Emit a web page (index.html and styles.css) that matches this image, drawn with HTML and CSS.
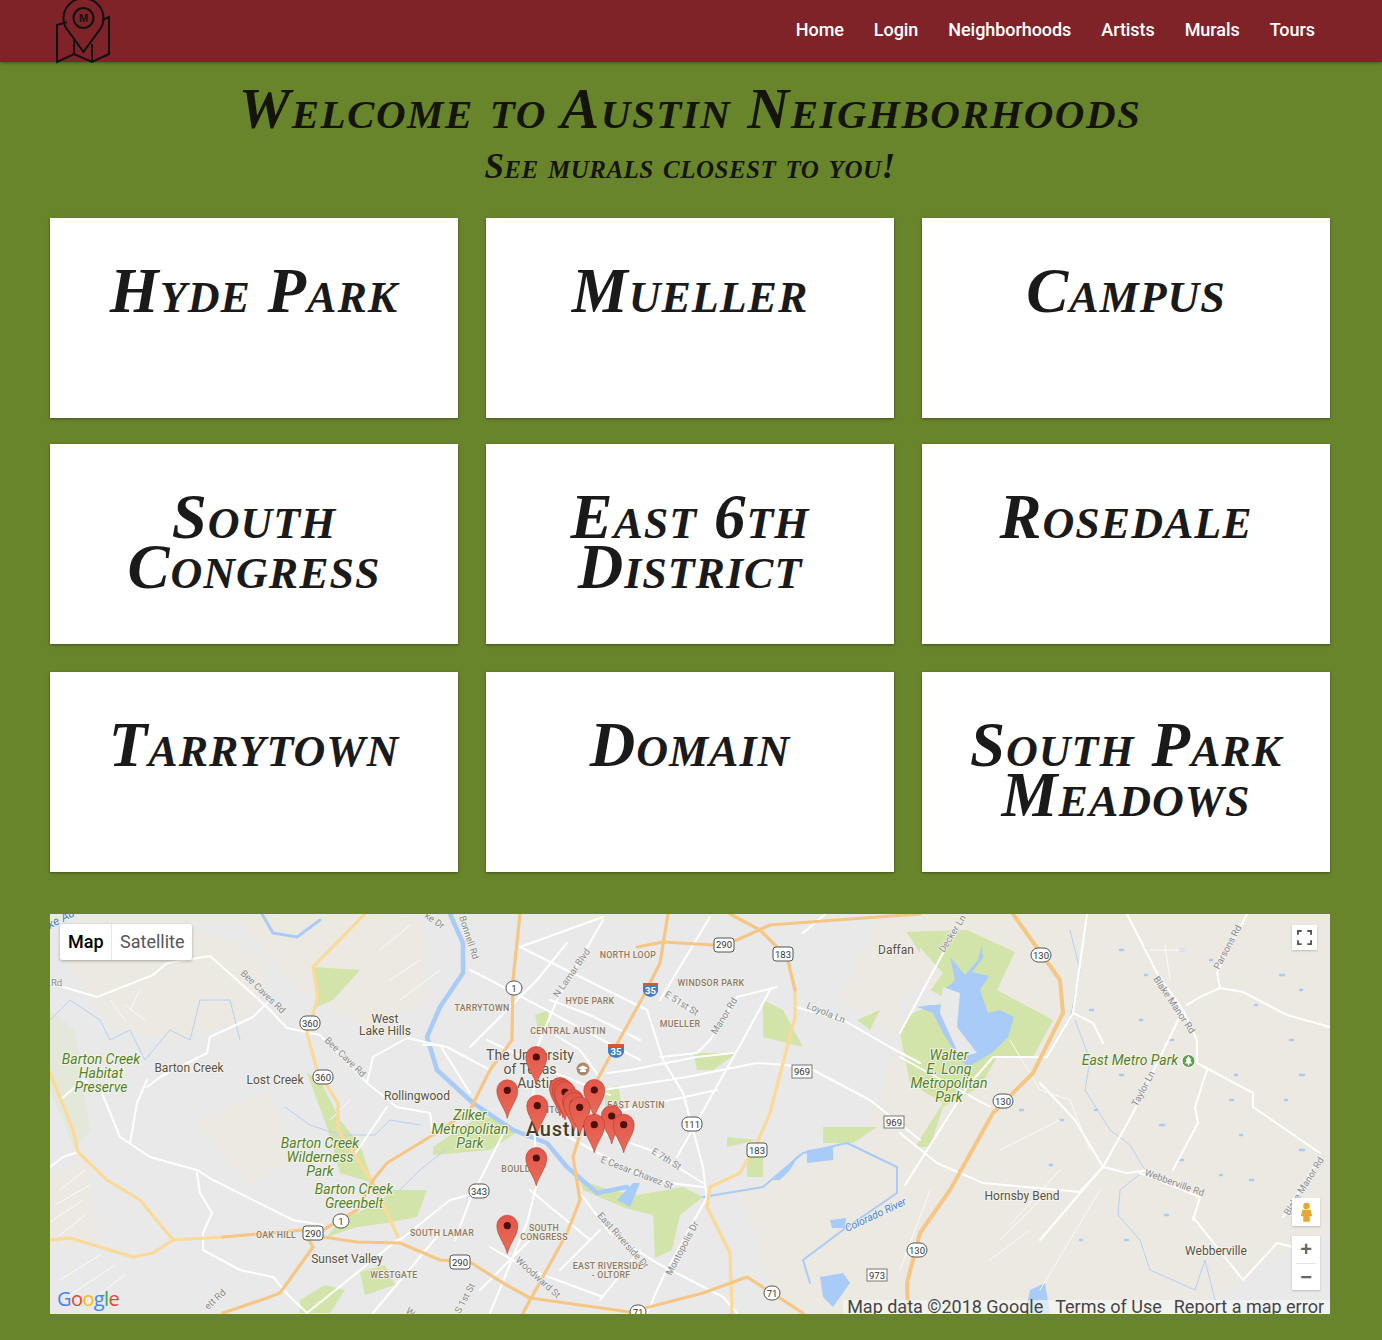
FILE: index.html
```html
<!DOCTYPE html>
<html lang="en">
<head>
    <meta charset="UTF-8">
    <meta name="viewport" content="width=device-width, initial-scale=1.0">
    <title>Austin Neighborhoods</title>
    <link rel="stylesheet" href="styles.css">
</head>
<body>
    <header class="navbar">
        <svg class="logo" viewBox="55 0 56 64">
            <path d="M67 22 L57 25 V62 L74 54 L92 62 L109 54 V17 L102 20"/>
            <path d="M74 40 V54 M92 44 V62"/>
            <path d="M83.5 52 L69 32 A20 20 0 1 1 98 32 Z"/>
            <circle cx="83.5" cy="18" r="10"/>
            <text class="logo-m" x="83.5" y="22" text-anchor="middle">M</text>
        </svg>
        <nav class="nav-links">
            <a href="#">Home</a>
            <a href="#">Login</a>
            <a href="#">Neighborhoods</a>
            <a href="#">Artists</a>
            <a href="#">Murals</a>
            <a href="#">Tours</a>
        </nav>
    </header>

    <main class="content">
        <h1 class="title">Welcome to Austin Neighborhoods</h1>
        <h2 class="subtitle">See murals closest to you!</h2>

        <div class="cards">
            <a class="card" href="#">Hyde Park</a>
            <a class="card" href="#">Mueller</a>
            <a class="card" href="#">Campus</a>
            <a class="card" href="#">South<br>Congress</a>
            <a class="card" href="#">East 6th<br>District</a>
            <a class="card" href="#">Rosedale</a>
            <a class="card card-low" href="#">Tarrytown</a>
            <a class="card card-low" href="#">Domain</a>
            <a class="card card-low" href="#">South Park<br>Meadows</a>
        </div>

        <div class="map">
            <svg class="map-canvas" viewBox="50 914 1280 400">
                <defs>
                    <linearGradient id="pinFill" x1="0" y1="0" x2="0" y2="1">
                        <stop offset="0" stop-color="#e2574a"/>
                        <stop offset="1" stop-color="#ea6b58"/>
                    </linearGradient>
                    <g id="pin">
                        <path class="pin-body" d="M0 28 C-2 18 -10.5 10 -10.5 0 A10.5 10.5 0 1 1 10.5 0 C10.5 10 2 18 0 28 Z"/>
                        <circle class="pin-dot" r="3.6"/>
                    </g>
                </defs>

                <!-- ground -->
                <rect class="land" x="50" y="914" width="1280" height="400"/>
                <path class="beige" d="M880 914 H1330 V1230 L1260 1262 L1200 1314 H780 L740 1190 L860 1150 L900 1040 L840 1000 Z"/>
                <path class="beige" d="M60 950 L200 930 L270 960 L250 1020 L180 1040 L110 1030 Z"/>
                <path class="beige" d="M240 920 L360 914 L420 920 L430 1000 L370 1030 L300 990 Z"/>
                <path class="beige" d="M195 1120 L270 1090 L290 1160 L250 1185 Z"/>
                <path class="beige" d="M50 1175 L90 1160 L95 1240 L50 1250 Z"/>
                <path class="beige-soft" d="M50 1010 L75 1030 L90 1130 L75 1150 L50 1090 Z"/>

                <!-- parks -->
                <path class="park" d="M313 967 L360 970 L333 1000 L317 1007 Z"/>
                <path class="park" d="M307 1073 L327 1127 L340 1173 L373 1183 L360 1145 L340 1120 L320 1080 Z"/>
                <path class="park" d="M393 1190 L427 1190 L417 1217 L387 1223 L357 1227 L327 1237 L340 1220 L375 1205 Z"/>
                <path class="park" d="M433 1147 L473 1120 L490 1117 L520 1130 L490 1150 L433 1155 Z"/>
                <path class="park" d="M580 1180 L610 1190 L637 1195 L683 1187 L703 1197 L680 1215 L672 1250 L655 1258 L653 1215 L625 1208 L583 1190 Z"/>
                <path class="park" d="M763 1000 L783 1010 L803 1047 L763 1037 Z"/>
                <path class="park" d="M693 1053 L737 1053 L713 1070 L697 1070 Z"/>
                <path class="park" d="M823 1127 L877 1127 L853 1143 L823 1143 Z"/>
                <path class="park" d="M903 1027 L920 997 L930 1047 Z"/>
                <path class="park" d="M857 1020 L880 1010 L870 1030 Z"/>
                <path class="park" d="M727 1137 L757 1140 L727 1147 Z"/>
                <path class="park" d="M747 1157 H763 V1177 H747 Z"/>
                <path class="park" d="M907 933 L920 940 L920 953 Z"/>
                <path class="park" d="M535 1015 L548 1010 L550 1028 L538 1030 Z"/>
                <path class="park" d="M605 1090 L618 1085 L622 1105 L605 1110 Z"/>
                <path class="park" d="M300 1300 L325 1285 L345 1290 L330 1313 L300 1313 Z"/>
                <path class="park" d="M360 1272 L385 1265 L395 1285 L365 1295 Z"/>
                <path class="park" d="M906 932 L967 930 L1015 952 L997 990 L1053 1020 L1033 1057 L997 1057 L980 1087 L943 1107 L930 1147 L915 1147 L943 1103 L910 1083 L900 1033 L943 973 Z"/>
                <path class="land" d="M900 1000 L920 985 L950 1000 L920 1010 L900 1020 Z"/>

                <!-- water -->
                <path class="water" d="M982 945 L983 958 L972 972 L989 976 L980 990 L988 1013 L1000 1010 L1014 1017 L1008 1037 L993 1052 L980 1060 L968 1067 L958 1057 L943 1033 L933 1013 L917 1007 L930 1005 L945 1005 L943 990 L950 985 L955 980 L950 957 L965 975 L978 960 Z"/>
                <path class="land" d="M943 987 L960 993 L957 1027 L977 1053 L960 1057 L940 1013 Z"/>
                <path class="water" d="M773 1180 L800 1153 L790 1170 L780 1180 Z"/>
                <path class="water" d="M807 1150 L833 1147 L833 1160 L807 1163 Z"/>
                <path class="water" d="M820 1277 L843 1273 L850 1283 L833 1307 L823 1297 Z"/>
                <path class="water" d="M617 1200 L633 1183 L640 1183 L630 1207 Z"/>
                <path class="water" d="M1030 1290 L1045 1283 L1050 1314 H1025 Z"/>
                <path class="water" d="M830 1220 L846 1218 L845 1228 L832 1228 Z"/>
                <path class="river" d="M450 914 L463 943 L463 973 L440 1007 L427 1037 L437 1070 L473 1103 L513 1130 L547 1143 L567 1167 L597 1193 L627 1187"/>
                <path class="river river-arm" d="M262 914 L273 933 L297 937 L320 920"/>
                <path class="river-thin" d="M703 1197 L763 1187 L803 1153 L847 1143 L897 1167 L897 1193 L843 1230 L803 1260 L810 1283"/>
                <path class="stream" d="M50 1020 L70 1000 L100 1020 L110 1040 L130 1030 L145 1060 L170 1030 L190 1040 L200 1000 L230 1000 L240 1040"/>
                <path class="stream" d="M1075 1020 L1090 1060 L1085 1090 L1110 1130 L1130 1145 L1145 1170 L1120 1190 L1118 1215 L1140 1240 L1150 1270 L1195 1290 L1205 1260 L1215 1300"/>
                <path class="stream" d="M285 1107 L310 1125 L340 1135 L375 1135 L390 1120 L420 1125"/>
                <path class="stream" d="M1070 1020 L1080 970 L1070 930"/>
                <path class="stream" d="M400 1190 L420 1170 L445 1150"/>
                <path class="specks" d="M1120 950h3M1145 975h2M1180 950h4M1210 960h2M1280 975h4M1300 990h2M1090 1010h3M1140 1020h2M1170 1040h3M1255 1005h2M1290 1040h3M1235 1075h2M1300 1075h4M1120 1075h3M1095 1110h2M1160 1125h4M1230 1100h3M1285 1100h2M1300 1150h4M1240 1135h2M1180 1160h3M1060 1120h3M1050 1165h2M1020 1110h3M960 1170h2M1250 1180h3M1125 1240h3M1080 1240h2M1165 1215h3M1220 1175h2"/>

                <!-- roads -->
                <g class="roads">
                    <path d="M50 983 L97 997 L153 975 L167 963 L210 956 L267 1007 L287 1028 L320 1035 L367 1083 L397 1107 L430 1113 L433 1133"/>
                    <path d="M60 1100 L83 1080 L102 1093 L120 1137 L150 1157 L197 1170 L213 1180 L293 1220 L323 1225"/>
                    <path d="M147 1087 L160 1077 L207 1053 L210 1037 L253 1017 L267 1003"/>
                    <path d="M130 1143 L137 1103 L147 1080"/>
                    <path d="M197 1173 L200 1193 L212 1213 L203 1233 L203 1250 L240 1270 L273 1277 L290 1297 L307 1313"/>
                    <path d="M50 1167 L63 1157 L78 1152"/>
                    <path d="M387 1107 L353 1157"/>
                    <path d="M367 1083 L373 1057 L407 1038 L447 1047 L490 1070"/>
                    <path d="M423 1045 H440 L470 1093"/>
                    <path d="M307 1313 L400 1238"/>
                    <path d="M400 1240 L450 1200 L487 1190"/>
                    <path d="M373 1313 L440 1233"/>
                    <path d="M603 920 L557 1000 L537 1047 L533 1100 L537 1183 L527 1223 L490 1313"/>
                    <path d="M520 947 L647 1010 L663 1060 L683 1093 L703 1167 L707 1200"/>
                    <path d="M603 1090 L687 1077 L757 1063 L787 1065 L813 1070 L870 1100 L920 1140"/>
                    <path d="M607 1073 L630 1070 L697 1057 L733 1053"/>
                    <path d="M610 1113 L717 1090"/>
                    <path d="M603 1133 L650 1150 L703 1183"/>
                    <path d="M550 1127 L630 1170 L670 1183 L703 1187"/>
                    <path d="M580 1193 L610 1233 L657 1263 L723 1297 L737 1313"/>
                    <path d="M707 1197 L663 1277 L647 1313"/>
                    <path d="M660 1057 L697 1053 L710 1040 L737 997 L777 987"/>
                    <path d="M667 997 L697 1013"/>
                    <path d="M795 1007 L843 1020 L890 1047 L920 1063"/>
                    <path d="M677 1157 L743 1040 L770 990"/>
                    <path d="M710 917 L660 1000"/>
                    <path d="M520 947 L603 917"/>
                    <path d="M470 1047 L537 980 L567 943"/>
                    <path d="M470 970 L490 980 L640 1060"/>
                    <path d="M803 933 L830 910"/>
                    <path d="M490 1247 L530 1270 L603 1297"/>
                    <path d="M1087 914 L1073 1013 L1047 1057 L993 1057 L967 1087 L905 1185"/>
                    <path d="M943 953 L900 1033"/>
                    <path d="M900 1133 L937 1163 L983 1183 L1080 1192 L1103 1167 L1127 1173 L1150 1170"/>
                    <path d="M1103 1167 L1133 1113 L1183 1010 L1157 973 L1127 914"/>
                    <path d="M1183 1010 L1197 1040 L1197 1063 L1253 1093 L1253 1107 L1320 1153"/>
                    <path d="M1220 988 L1243 992 L1287 1015 L1330 1027"/>
                    <path d="M1247 914 L1217 973 L1220 988 L1200 997 L1187 1005"/>
                    <path d="M1207 1070 L1195 1107 L1198 1123 L1173 1170"/>
                    <path d="M1193 1217 L1243 1280 L1277 1243 L1293 1247"/>
                    <path d="M1140 1173 L1200 1197 L1193 1220"/>
                    <path d="M1320 1157 L1283 1217"/>
                    <path d="M900 1057 L990 1107"/>
                    <path d="M1073 1013 L1093 1023 L1103 1043"/>
                    <path d="M1040 1083 L1075 1120 L1103 1167"/>
                    <path d="M1040 1240 L1100 1170"/>
                    <path d="M550 1000 L590 1015 L640 1040"/>
                    <path d="M487 1040 L560 1075 L610 1095"/>
                    <path d="M555 1035 L580 1050 L598 1075"/>
                    <path d="M505 1130 L470 1200 L455 1240"/>
                    <path d="M530 1190 L590 1240"/>
                    <path d="M480 1290 L530 1240"/>
                    <path d="M560 1270 L600 1230"/>
                    <path d="M600 1300 L640 1250"/>
                </g>
                <g class="roads-thin">
                    <path d="M60 1190 L85 1170 M55 1205 L90 1185 M50 1222 L83 1200 M60 1235 L85 1215"/>
                    <path d="M60 1280 L100 1255 M70 1295 L115 1265 M85 1305 L125 1275"/>
                    <path d="M110 1000 L125 1020 M125 1005 L145 1020 M140 990 L130 1010"/>
                    <path d="M1000 1150 L1060 1120 M1010 1225 L1060 1170 M1000 1240 L1040 1200 M990 1260 L1030 1230"/>
                    <path d="M1150 950 L1185 950 M1165 945 L1170 980"/>
                    <path d="M1040 1290 L1070 1240 L1100 1190"/>
                    <path d="M1010 1040 L1040 1090 L1070 1100 L1090 1150"/>
                    <path d="M390 980 L420 960 M400 1000 L440 970 M380 950 L410 925"/>
                    <path d="M330 1120 L350 1100 M900 1270 L930 1190"/>
                </g>

                <!-- highways -->
                <g class="highways">
                    <path class="hw-light" d="M50 1240 L70 1238 L133 1257 L153 1253 L173 1240 L223 1237"/>
                    <path class="hw-light" d="M50 1073 L73 1130 L78 1152 L107 1180 L140 1200 L173 1240"/>
                    <path class="hw-light" d="M365 914 L313 967 L318 997 L307 1033 L317 1070 L338 1103 L338 1130 L373 1183 L398 1237"/>
                    <path class="hw-light" d="M795 990 L795 1017 L770 1113 L757 1143 L740 1173 L710 1187 L707 1207 L730 1253 L732 1313"/>
                    <path d="M520 914 L513 980 L512 1040 L490 1070 L470 1110 L433 1135 L387 1163 L373 1180 L357 1210 L323 1230 L303 1230 L223 1237"/>
                    <path d="M323 1237 L357 1242 L400 1243 L440 1260 L470 1262 L503 1283 L530 1298 L630 1312 L703 1293 L747 1277 L803 1313"/>
                    <path d="M307 1237 L313 1247 L280 1293 L267 1298 L223 1313"/>
                    <path d="M668 914 L660 963 L643 997 L597 1080 L573 1157 L580 1200 L567 1233 L523 1313"/>
                    <path d="M637 947 L663 942 L713 945 L737 940 L770 925 L837 920 L920 914"/>
                    <path d="M730 914 L760 930 L787 957 L795 990"/>
                    <path class="hw-wide" d="M1013 914 L1060 980 L1063 1013 L1033 1073 L993 1113 L950 1190 L920 1233 L907 1283 L908 1314"/>
                </g>

                <!-- route shields -->
                <g class="shield"><rect x="300" y="1016" width="20" height="14" rx="6"/><text x="310" y="1027">360</text></g>
                <g class="shield"><rect x="313" y="1070" width="20" height="14" rx="6"/><text x="323" y="1081">360</text></g>
                <g class="shield"><rect x="506" y="981" width="16" height="14" rx="7"/><text x="514" y="992">1</text></g>
                <g class="shield"><rect x="333" y="1214" width="16" height="14" rx="7"/><text x="341" y="1225">1</text></g>
                <g class="shield"><rect x="303" y="1226" width="20" height="14" rx="3"/><text x="313" y="1237">290</text></g>
                <g class="shield"><rect x="450" y="1255" width="20" height="14" rx="3"/><text x="460" y="1266">290</text></g>
                <g class="shield"><rect x="469" y="1184" width="20" height="14" rx="6"/><text x="479" y="1195">343</text></g>
                <g class="shield"><rect x="714" y="938" width="20" height="14" rx="3"/><text x="724" y="948">290</text></g>
                <g class="shield"><rect x="773" y="947" width="20" height="14" rx="3"/><text x="783" y="958">183</text></g>
                <g class="shield"><rect x="682" y="1117" width="20" height="14" rx="6"/><text x="692" y="1128">111</text></g>
                <g class="shield"><rect x="747" y="1143" width="20" height="14" rx="3"/><text x="757" y="1154">183</text></g>
                <g class="shield"><rect x="764" y="1286" width="16" height="14" rx="7"/><text x="772" y="1297">71</text></g>
                <g class="shield"><rect x="630" y="1305" width="16" height="14" rx="7"/><text x="638" y="1316">71</text></g>
                <g class="shield"><rect x="1031" y="948" width="20" height="14" rx="7"/><text x="1041" y="959">130</text></g>
                <g class="shield"><rect x="993" y="1094" width="20" height="14" rx="7"/><text x="1003" y="1105">130</text></g>
                <g class="shield"><rect x="907" y="1243" width="20" height="14" rx="7"/><text x="917" y="1254">130</text></g>
                <g class="shield shield-box"><rect x="792" y="1065" width="20" height="13"/><text x="802" y="1075">969</text></g>
                <g class="shield shield-box"><rect x="884" y="1116" width="20" height="12"/><text x="894" y="1126">969</text></g>
                <g class="shield shield-box"><rect x="867" y="1269" width="20" height="12"/><text x="877" y="1279">973</text></g>
                <g class="interstate"><path class="is-blue" d="M643 983 H658 V991 Q657 996 650.500 997 Q644 996 643 991 Z"/><path class="is-red" d="M643 983 H658 V986 H643 Z"/><text x="650.500" y="994">35</text></g>
                <g class="interstate"><path class="is-blue" d="M608 1044 H624 V1052 Q623 1057 616 1058 Q609 1057 608 1052 Z"/><path class="is-red" d="M608 1044 H624 V1047 H608 Z"/><text x="616" y="1055">35</text></g>

                <!-- place names -->
                <g class="place">
                    <text x="385" y="1023">West</text>
                    <text x="385" y="1035">Lake Hills</text>
                    <text x="189" y="1072">Barton Creek</text>
                    <text x="275" y="1084">Lost Creek</text>
                    <text x="417" y="1100">Rollingwood</text>
                    <text x="347" y="1263">Sunset Valley</text>
                    <text x="896" y="954">Daffan</text>
                    <text x="1022" y="1200">Hornsby Bend</text>
                    <text x="1216" y="1255">Webberville</text>
                </g>
                <g class="place place-big">
                    <text x="530" y="1060">The University</text>
                    <text x="530" y="1074">of Texas</text>
                    <text x="537" y="1088">Austin</text>
                </g>
                <text class="city" x="557" y="1136">Austin</text>
                <circle class="poi" cx="583" cy="1069" r="6.500"/>
                <path class="poi-cap" d="M578 1068 L583 1065.500 L588 1068 L583 1070.500 Z M580 1070 H586 V1072 H580 Z"/>

                <g class="area">
                    <text x="482" y="1011">TARRYTOWN</text>
                    <text x="628" y="958">NORTH LOOP</text>
                    <text x="711" y="986">WINDSOR PARK</text>
                    <text x="590" y="1004">HYDE PARK</text>
                    <text x="568" y="1034">CENTRAL AUSTIN</text>
                    <text x="680" y="1027">MUELLER</text>
                    <text x="636" y="1108">EAST AUSTIN</text>
                    <text x="442" y="1236">SOUTH LAMAR</text>
                    <text x="394" y="1278">WESTGATE</text>
                    <text x="276" y="1238">OAK HILL</text>
                    <text x="544" y="1231">SOUTH</text>
                    <text x="544" y="1240">CONGRESS</text>
                    <text x="608" y="1269">EAST RIVERSIDE</text>
                    <text x="611" y="1278">- OLTORF</text>
                    <text x="516" y="1172">BOULD</text>
                    <text x="552" y="1113">NTO</text>
                </g>

                <g class="parkname">
                    <text x="101" y="1064">Barton Creek</text>
                    <text x="101" y="1078">Habitat</text>
                    <text x="101" y="1092">Preserve</text>
                    <text x="470" y="1120">Zilker</text>
                    <text x="470" y="1134">Metropolitan</text>
                    <text x="470" y="1148">Park</text>
                    <text x="320" y="1148">Barton Creek</text>
                    <text x="320" y="1162">Wilderness</text>
                    <text x="320" y="1176">Park</text>
                    <text x="354" y="1194">Barton Creek</text>
                    <text x="354" y="1208">Greenbelt</text>
                    <text x="949" y="1060">Walter</text>
                    <text x="949" y="1074">E. Long</text>
                    <text x="949" y="1088">Metropolitan</text>
                    <text x="949" y="1102">Park</text>
                    <text x="1130" y="1065">East Metro Park</text>
                </g>
                <circle class="park-icon" cx="1188.500" cy="1061" r="6.500"/>
                <path class="park-tree" d="M1188.500 1056 L1191.500 1060 L1190.300 1060 L1192 1063.500 L1189.300 1063.500 V1065.500 H1187.700 V1063.500 L1185 1063.500 L1186.700 1060 L1185.500 1060 Z"/>

                <!-- road names -->
                <g class="roadname">
                    <text transform="translate(240 974) rotate(44)">Bee Caves Rd</text>
                    <text transform="translate(324 1041) rotate(44)">Bee Cave Rd</text>
                    <text transform="translate(459 917) rotate(72)">Bonnell Rd</text>
                    <text transform="translate(424 917) rotate(35)">ke Dr</text>
                    <text x="51" y="986">Rd</text>
                    <text transform="translate(558 998) rotate(-55)">N Lamar Blvd</text>
                    <text transform="translate(664 996) rotate(32)">E 51st St</text>
                    <text transform="translate(716 1035) rotate(-58)">Manor Rd</text>
                    <text transform="translate(806 1008) rotate(22)">Loyola Ln</text>
                    <text transform="translate(651 1153) rotate(32)">E 7th St</text>
                    <text transform="translate(600 1162) rotate(21)">E Cesar Chavez St</text>
                    <text transform="translate(597 1216) rotate(48)">East Riverside Dr</text>
                    <text transform="translate(515 1261) rotate(42)">Woodward St</text>
                    <text transform="translate(671 1276) rotate(-62)">Montopolis Dr</text>
                    <text transform="translate(944 953) rotate(-58)">Decker Ln</text>
                    <text transform="translate(1219 970) rotate(-62)">Parsons Rd</text>
                    <text transform="translate(1153 979) rotate(56)">Blake Manor Rd</text>
                    <text transform="translate(1137 1107) rotate(-62)">Taylor Ln</text>
                    <text transform="translate(1144 1175) rotate(20)">Webberville Rd</text>
                    <text transform="translate(1289 1216) rotate(-58)">Blake Manor Rd</text>
                    <text transform="translate(208 1310) rotate(-42)">ett Rd</text>
                    <text transform="translate(405 1312) rotate(38)">W S</text>
                    <text transform="translate(460 1314) rotate(-62)">S 1st St</text>
                </g>
                <text class="rivername" transform="translate(847 1232) rotate(-25)">Colorado River</text>
                <text class="rivername rivername-top" transform="translate(50 929) rotate(-28)">ke Au</text>

                <!-- markers -->
                <use href="#pin" x="536.300" y="1057"/>
                <use href="#pin" x="507.300" y="1090.300"/>
                <use href="#pin" x="537.300" y="1105.700"/>
                <use href="#pin" x="560" y="1088"/>
                <use href="#pin" x="563" y="1090"/>
                <use href="#pin" x="565" y="1092"/>
                <use href="#pin" x="594.300" y="1090"/>
                <use href="#pin" x="573" y="1100"/>
                <use href="#pin" x="574" y="1103"/>
                <use href="#pin" x="579.700" y="1107.300"/>
                <use href="#pin" x="611.700" y="1116"/>
                <use href="#pin" x="594.300" y="1124.700"/>
                <use href="#pin" x="623.700" y="1124.700"/>
                <use href="#pin" x="536.300" y="1158"/>
                <use href="#pin" x="507.300" y="1225.700"/>

                <!-- google logo -->
                <text class="google" x="57" y="1306"><tspan fill="#4285f4">G</tspan><tspan fill="#ea4335">o</tspan><tspan fill="#fbbc05">o</tspan><tspan fill="#4285f4">g</tspan><tspan fill="#34a853">l</tspan><tspan fill="#ea4335">e</tspan></text>
            </svg>

            <div class="map-type">
                <span class="map-type-btn map-type-active">Map</span>
                <span class="map-type-btn">Satellite</span>
            </div>

            <button class="map-btn fullscreen" aria-label="Fullscreen">
                <svg viewBox="0 0 16 16"><path d="M1 5 V1 H5 M11 1 H15 V5 M15 11 V15 H11 M5 15 H1 V11"/></svg>
            </button>

            <button class="map-btn pegman" aria-label="Street View">
                <svg viewBox="0 0 14 22">
                    <circle cx="7" cy="4" r="3.500"/>
                    <path d="M2.500 8 H11.500 L13 15 L10.500 15 L10.500 21 H3.500 L3.500 15 L1 15 Z"/>
                </svg>
            </button>

            <div class="zoom-box">
                <button class="zoom-btn">+</button>
                <span class="zoom-line"></span>
                <button class="zoom-btn">−</button>
            </div>

            <div class="attribution">
                <span>Map data ©2018 Google</span>
                <span>Terms of Use</span>
                <span>Report a map error</span>
            </div>
        </div>
    </main>
</body>
</html>
```

FILE: styles.css
```css
body {
    font-family: Roboto, Arial, sans-serif;
    margin: 0;
    padding: 0;
    background-color: #69852c;
}

.navbar {
    height: 62px;
    background-color: #7f2329;
    box-shadow: 0 1px 3px rgba(0, 0, 0, 0.35);
    display: flex;
    justify-content: space-between;
    align-items: center;
    padding: 0 67px 0 55px;
    position: relative;
}
.logo {
    width: 56px;
    height: 64px;
    align-self: flex-start;
    fill: none;
    stroke: #111;
    stroke-width: 2;
}
.logo-m {
    font-family: "Liberation Sans", sans-serif;
    font-size: 11px;
    font-weight: 700;
    fill: #111;
    stroke: none;
}
.nav-links {
    display: flex;
    gap: 30px;
}
.nav-links a {
    color: #fff;
    text-decoration: none;
    font-size: 18px;
    font-weight: 500;
    letter-spacing: -0.06px;
    padding: 0 0 3px 0;
}

.content {
    padding: 0 52px 26px 50px;
}
.title, .subtitle, .card {
    font-family: "Liberation Serif", serif;
    font-style: italic;
    font-weight: 700;
    font-variant: small-caps;
    color: #141408;
}
.title {
    font-size: 58px;
    line-height: 66px;
    letter-spacing: 1.5px;
    text-align: center;
    margin: 14px 0 0 0;
}
.subtitle {
    font-size: 35px;
    line-height: 44px;
    letter-spacing: 0.5px;
    text-align: center;
    margin: 3px 0 29px 0;
}

.cards {
    display: grid;
    grid-template-columns: repeat(3, 408px);
    column-gap: 28px;
    row-gap: 26px;
}
.card {
    height: 200px;
    box-sizing: border-box;
    padding-top: 48px;
    background-color: #fff;
    box-shadow: 0 1px 3px rgba(0, 0, 0, 0.4);
    font-size: 63px;
    line-height: 50px;
    letter-spacing: 1px;
    text-align: center;
    text-decoration: none;
    color: #1a1a1a;
}
.card-low {
    margin-top: 2px;
}

.map {
    position: relative;
    width: 1280px;
    height: 400px;
    margin-top: 42px;
    overflow: hidden;
}
.map-canvas {
    display: block;
    width: 1280px;
    height: 400px;
    font-family: Roboto, Arial, sans-serif;
}
.land { fill: #e9e9e9; }
.beige { fill: #ebe9e1; }
.beige-soft { fill: #e3e8da; }
.park { fill: #d2e4a9; }
.water { fill: #a9cbf8; }
.river, .river-thin, .stream, .specks, .roads path, .roads-thin path, .highways path {
    fill: none;
    stroke-linejoin: round;
    stroke-linecap: round;
}
.river { stroke: #a9cbf8; stroke-width: 4.5; }
.river-arm { stroke-width: 3; }
.river-thin { stroke: #a9cbf8; stroke-width: 2; }
.stream { stroke: #b4d0f6; stroke-width: 1; }
.specks { stroke: #a9cbf8; stroke-width: 2.5; }
.roads path { stroke: #fff; stroke-width: 2; }
.roads-thin path { stroke: #fbfbfb; stroke-width: 1; }
.highways path { stroke: #f6c685; stroke-width: 3.2; }
.highways .hw-light { stroke: #fbd996; }
.highways .hw-wide { stroke-width: 4; }

.shield rect {
    fill: #fff;
    stroke: #555;
    stroke-width: 1;
}
.shield text {
    font-size: 9.500px;
    fill: #333;
    text-anchor: middle;
}
.shield-box rect { stroke: #777; }
.interstate text {
    font-size: 9.500px;
    font-weight: 700;
    fill: #fff;
    text-anchor: middle;
}
.is-blue { fill: #3f7fc9; }
.is-red { fill: #d8543f; }

.place text {
    font-size: 12px;
    fill: #5c5340;
    text-anchor: middle;
    paint-order: stroke;
    stroke: #f2f2f0;
    stroke-width: 2px;
}
.place-big text {
    font-size: 14px;
}
.city {
    font-size: 20px;
    font-weight: 500;
    letter-spacing: 0.8px;
    fill: #463d2b;
    text-anchor: middle;
    paint-order: stroke;
    stroke: #f2f2f0;
    stroke-width: 2px;
}
.poi { fill: #a98c6c; }
.poi-cap { fill: #fff; }
.area text {
    font-size: 8.800px;
    font-weight: 500;
    letter-spacing: 0.3px;
    fill: #907a60;
    text-anchor: middle;
    paint-order: stroke;
    stroke: #f0f0ec;
    stroke-width: 1.500px;
}
.parkname text {
    font-size: 14px;
    font-style: italic;
    fill: #55812b;
    text-anchor: middle;
    paint-order: stroke;
    stroke: #f2f5e6;
    stroke-width: 2px;
}
.park-icon { fill: #5f9c4e; stroke: #fff; stroke-width: 1; }
.park-tree { fill: #fff; }
.roadname text {
    font-size: 9.500px;
    fill: #8a8a8a;
    paint-order: stroke;
    stroke: #f2f2f2;
    stroke-width: 1.500px;
}
.rivername {
    font-size: 10.500px;
    font-style: italic;
    fill: #4f82cc;
    paint-order: stroke;
    stroke: #eef2f5;
    stroke-width: 1.500px;
}
.rivername-top {
    font-size: 12px;
}
.pin-body {
    fill: url(#pinFill);
    stroke: #b63c30;
    stroke-width: 0.600;
}
.pin-dot { fill: #4d100b; }
.google {
    font-family: "Open Sans", sans-serif;
    font-size: 20px;
    letter-spacing: -0.6px;
}

.map-type {
    position: absolute;
    left: 10px;
    top: 10px;
    display: flex;
    background-color: #fff;
    box-shadow: 0 1px 3px rgba(0, 0, 0, 0.3);
    border-radius: 2px;
    font-size: 18px;
    line-height: 36px;
    color: #565656;
}
.map-type-btn {
    padding: 0 7.500px 0 8px;
}
.map-type-active {
    color: #000;
    font-weight: 500;
    border-right: 1px solid #e6e6e6;
}
.map-btn {
    position: absolute;
    right: 13px;
    border: 0;
    padding: 0;
    background-color: #fff;
    box-shadow: 0 1px 2px rgba(0, 0, 0, 0.2);
    display: flex;
    align-items: center;
    justify-content: center;
}
.fullscreen {
    top: 11px;
    width: 25px;
    height: 25px;
    right: 13px;
}
.fullscreen svg {
    width: 15px;
    height: 15px;
    fill: none;
    stroke: #555;
    stroke-width: 2;
}
.pegman {
    top: 284px;
    right: 10px;
    width: 28px;
    height: 28px;
}
.pegman svg {
    width: 13px;
    height: 21px;
    fill: #e8a72f;
}
.zoom-box {
    position: absolute;
    top: 322px;
    right: 10px;
    width: 28px;
    height: 54px;
    background-color: #fff;
    box-shadow: 0 1px 2px rgba(0, 0, 0, 0.2);
    display: flex;
    flex-direction: column;
    align-items: center;
}
.zoom-btn {
    flex: 1;
    width: 100%;
    border: 0;
    padding: 0;
    background: none;
    font-family: "Liberation Sans", sans-serif;
    font-size: 20px;
    font-weight: 700;
    line-height: 1;
    color: #666;
}
.zoom-line {
    width: 20px;
    height: 1px;
    background-color: #e6e6e6;
}
.attribution {
    position: absolute;
    right: 0;
    bottom: 0;
    height: 14px;
    padding: 0 6px 0 4px;
    background-color: rgba(245, 245, 245, 0.7);
    display: flex;
    gap: 12px;
    font-size: 18px;
    line-height: 14px;
    color: #444;
    white-space: nowrap;
}
```
